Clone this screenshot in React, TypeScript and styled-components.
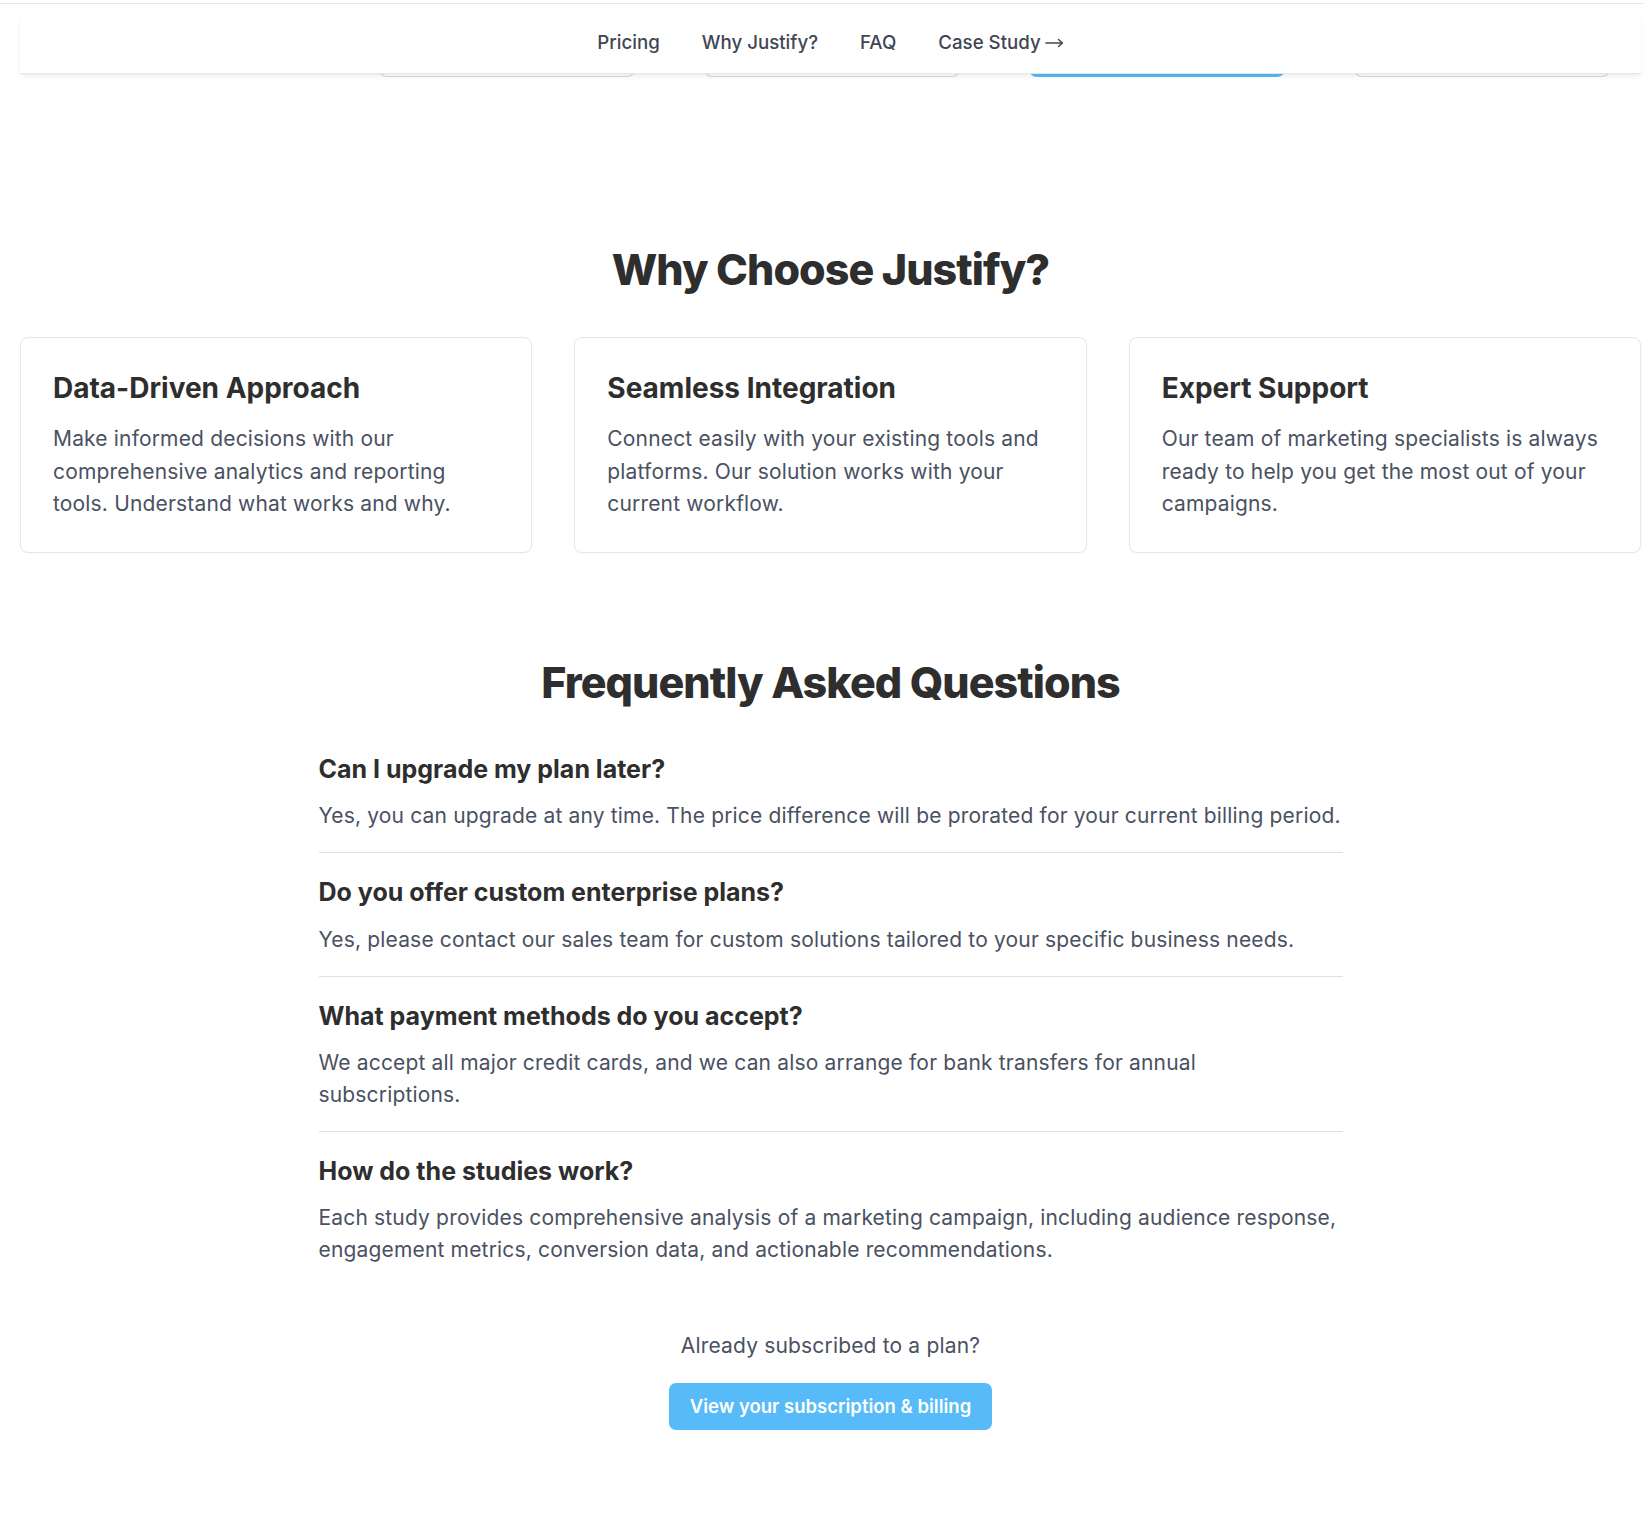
import React from "react";
import styled, { createGlobalStyle } from "styled-components";

const GlobalStyle = createGlobalStyle`
  html, body { margin: 0; padding: 0; background: #ffffff; }
  body {
    font-family: Inter, "Noto Sans", "Liberation Sans", sans-serif;
    color: #2f2f2f;
    -webkit-font-smoothing: antialiased;
  }
  * { box-sizing: border-box; }
`;

const NavLayer = styled.header`
  position: fixed;
  top: 0;
  left: 0;
  right: 0;
  z-index: 20;
  background: #ffffff;
  padding: 12px 3px 0 20px;
  &::before {
    content: "";
    position: absolute;
    top: 3px;
    left: 0;
    right: 0;
    height: 1px;
    background: #e5e7eb;
  }
`;

const NavBar = styled.nav`
  height: 62px;
  background: #ffffff;
  border-bottom: 1px solid #e5e7eb;
  box-shadow: 0 4px 6px -1px rgba(0, 0, 0, 0.06), 0 2px 4px -2px rgba(0, 0, 0, 0.05);
  display: flex;
  align-items: center;
  justify-content: center;
  gap: 42px;
`;

const NavLink = styled.a`
  display: inline-flex;
  align-items: center;
  gap: 4px;
  font-size: 18.7px;
  font-weight: 500;
  color: #3f4654;
  text-decoration: none;
  cursor: pointer;
`;

const ArrowIcon = styled.svg`
  width: 19px;
  height: 12px;
  margin-top: 1px;
`;

const Main = styled.main`
  padding: 0 3px 0 20px;
`;

const PricingTail = styled.div`
  height: 77px;
  display: grid;
  grid-template-columns: repeat(5, 256px);
  column-gap: 69px;
  align-items: end;
  padding-left: 34px;
`;

const PlanStub = styled.div<{ $featured?: boolean; $hidden?: boolean }>`
  height: 30px;
  border: ${(p) => (p.$featured ? "3px solid #56b9f7" : "1px solid #d4d7dc")};
  border-top: none;
  border-radius: 0 0 8px 8px;
  visibility: ${(p) => (p.$hidden ? "hidden" : "visible")};
`;

const Section = styled.section<{ $top: number }>`
  padding-top: ${(p) => p.$top}px;
`;

const SectionTitle = styled.h2`
  margin: 0;
  text-align: center;
  font-size: 43px;
  line-height: 53px;
  font-weight: 800;
  letter-spacing: -0.022em;
  color: #2e2e2e;
`;

const CardGrid = styled.div`
  display: grid;
  grid-template-columns: repeat(3, 1fr);
  gap: 42px;
  margin-top: 41px;
`;

const Card = styled.div`
  border: 1px solid #e5e7eb;
  border-radius: 8px;
  padding: 32px 32px 31px;
  background: #fff;
  box-shadow: 0 1px 2px rgba(0, 0, 0, 0.03);
`;

const CardTitle = styled.h3`
  margin: 0 0 17px;
  font-size: 28px;
  line-height: 36px;
  font-weight: 700;
  color: #2e2e2e;
`;

const BodyText = styled.p<{ $lh?: number }>`
  margin: 0;
  font-size: 21px;
  letter-spacing: 0.008em;
  line-height: ${(p) => p.$lh ?? 31.5}px;
  color: #4a5162;
`;

const FaqList = styled.div`
  width: 1024px;
  margin: 21px auto 0;
`;

const FaqItem = styled.div<{ $last?: boolean }>`
  padding: 23px 0 20.5px;
  border-bottom: ${(p) => (p.$last ? "none" : "1px solid #dcdfe3")};
`;

const Question = styled.h3`
  margin: 0 0 15.5px;
  font-size: 25px;
  line-height: 32px;
  font-weight: 700;
  color: #2e2e2e;
`;

const Footer = styled.div`
  margin-top: 46px;
  display: flex;
  flex-direction: column;
  align-items: center;
  gap: 23px;
  padding-bottom: 100px;
`;

const FooterNote = styled.p`
  margin: 0;
  font-size: 21px;
  letter-spacing: 0.008em;
  line-height: 28px;
  color: #4a5162;
`;

const BillingButton = styled.button`
  height: 47px;
  padding: 0 21px;
  border: none;
  border-radius: 7px;
  background: #56bbf8;
  color: #ffffff;
  font-family: inherit;
  font-size: 18.5px;
  font-weight: 600;
  cursor: pointer;
`;

const features = [
  {
    title: "Data-Driven Approach",
    text: "Make informed decisions with our comprehensive analytics and reporting tools. Understand what works and why.",
  },
  {
    title: "Seamless Integration",
    text: "Connect easily with your existing tools and platforms. Our solution works with your current workflow.",
  },
  {
    title: "Expert Support",
    text: "Our team of marketing specialists is always ready to help you get the most out of your campaigns.",
  },
];

const faqs = [
  {
    q: "Can I upgrade my plan later?",
    a: "Yes, you can upgrade at any time. The price difference will be prorated for your current billing period.",
  },
  {
    q: "Do you offer custom enterprise plans?",
    a: "Yes, please contact our sales team for custom solutions tailored to your specific business needs.",
  },
  {
    q: "What payment methods do you accept?",
    a: "We accept all major credit cards, and we can also arrange for bank transfers for annual subscriptions.",
  },
  {
    q: "How do the studies work?",
    a: "Each study provides comprehensive analysis of a marketing campaign, including audience response, engagement metrics, conversion data, and actionable recommendations.",
  },
];

export default function App() {
  return (
    <>
      <GlobalStyle />
      <NavLayer>
        <NavBar>
          <NavLink>Pricing</NavLink>
          <NavLink>Why Justify?</NavLink>
          <NavLink>FAQ</NavLink>
          <NavLink>
            Case Study
            <ArrowIcon viewBox="0 0 19 12" fill="none" stroke="currentColor" strokeWidth="1.5" strokeLinecap="round" strokeLinejoin="round">
              <path d="M1 6h16.5M13.5 2.5 17.5 6l-4 3.5" />
            </ArrowIcon>
          </NavLink>
        </NavBar>
      </NavLayer>
      <Main>
        <PricingTail>
          <PlanStub $hidden />
          <PlanStub />
          <PlanStub />
          <PlanStub $featured />
          <PlanStub />
        </PricingTail>
        <Section $top={166}>
          <SectionTitle>Why Choose Justify?</SectionTitle>
          <CardGrid>
            {features.map((f) => (
              <Card key={f.title}>
                <CardTitle>{f.title}</CardTitle>
                <BodyText $lh={32.5}>{f.text}</BodyText>
              </Card>
            ))}
          </CardGrid>
        </Section>
        <Section $top={103}>
          <SectionTitle>Frequently Asked Questions</SectionTitle>
          <FaqList>
            {faqs.map((f, i) => (
              <FaqItem key={f.q} $last={i === faqs.length - 1}>
                <Question>{f.q}</Question>
                <BodyText>{f.a}</BodyText>
              </FaqItem>
            ))}
          </FaqList>
          <Footer>
            <FooterNote>Already subscribed to a plan?</FooterNote>
            <BillingButton>View your subscription &amp; billing</BillingButton>
          </Footer>
        </Section>
      </Main>
    </>
  );
}
